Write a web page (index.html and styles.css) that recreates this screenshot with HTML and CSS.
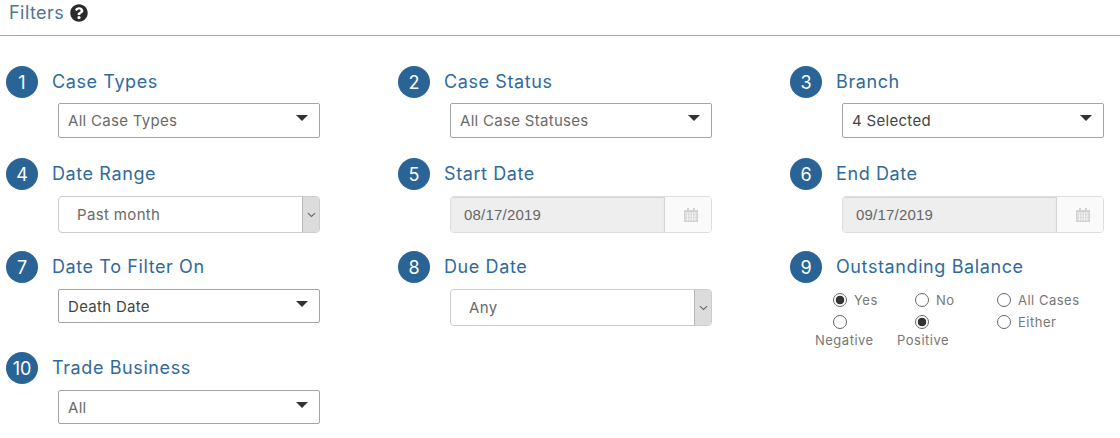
FILE: index.html
```html
<!DOCTYPE html>
<html lang="en">
<head>
    <meta charset="UTF-8">
    <meta name="viewport" content="width=device-width, initial-scale=1.0">
    <title>Filters</title>
    <link rel="stylesheet" href="styles.css">
</head>
<body>
    <div class="panel-head">
        <h2 class="panel-title">Filters</h2>
        <svg class="help-icon" viewBox="0 0 512 512"><path fill="#2b2b2b" d="M504 256c0 136.997-111.043 248-248 248S8 392.997 8 256C8 119.083 119.043 8 256 8s248 111.083 248 248zM262.655 90c-54.497 0-89.255 22.957-116.549 63.758-3.536 5.286-2.353 12.415 2.715 16.258l34.699 26.31c5.205 3.947 12.621 3.008 16.665-2.122 17.864-22.658 30.113-35.797 57.303-35.797 20.429 0 45.698 13.148 45.698 32.958 0 14.976-12.363 22.667-32.534 33.976C247.128 238.528 216 254.941 216 296v4c0 6.627 5.373 12 12 12h56c6.627 0 12-5.373 12-12v-1.333c0-28.462 83.186-29.647 83.186-106.667 0-58.002-60.165-102-116.531-102zM256 338c-25.365 0-46 20.635-46 46 0 25.364 20.635 46 46 46s46-20.636 46-46c0-25.365-20.635-46-46-46z"/></svg>
    </div>

    <div class="filters">
        <!-- Row 1 -->
        <div class="field">
            <div class="field-head"><span class="step">1</span><span class="field-label">Case Types</span></div>
            <div class="dropdown"><span>All Case Types</span><i class="caret"></i></div>
        </div>
        <div class="field">
            <div class="field-head"><span class="step">2</span><span class="field-label">Case Status</span></div>
            <div class="dropdown"><span>All Case Statuses</span><i class="caret"></i></div>
        </div>
        <div class="field">
            <div class="field-head"><span class="step">3</span><span class="field-label">Branch</span></div>
            <div class="dropdown dark"><span>4 Selected</span><i class="caret"></i></div>
        </div>

        <!-- Row 2 -->
        <div class="field">
            <div class="field-head"><span class="step">4</span><span class="field-label">Date Range</span></div>
            <div class="native-select">
                <span class="native-text">Past month</span>
                <span class="native-arrow"><svg viewBox="0 0 10 6"><path d="M1 1l4 3.6L9 1" fill="none" stroke="#666" stroke-width="1.2"/></svg></span>
            </div>
        </div>
        <div class="field">
            <div class="field-head"><span class="step">5</span><span class="field-label">Start Date</span></div>
            <div class="date-input">
                <span class="date-text">08/17/2019</span>
                <span class="date-addon"><svg viewBox="0 0 14 14"><use href="#cal"/></svg></span>
            </div>
        </div>
        <div class="field">
            <div class="field-head"><span class="step">6</span><span class="field-label">End Date</span></div>
            <div class="date-input">
                <span class="date-text">09/17/2019</span>
                <span class="date-addon"><svg viewBox="0 0 14 14"><use href="#cal"/></svg></span>
            </div>
        </div>

        <!-- Row 3 -->
        <div class="field">
            <div class="field-head"><span class="step">7</span><span class="field-label">Date To Filter On</span></div>
            <div class="dropdown dark short"><span>Death Date</span><i class="caret"></i></div>
        </div>
        <div class="field">
            <div class="field-head"><span class="step">8</span><span class="field-label">Due Date</span></div>
            <div class="native-select">
                <span class="native-text">Any</span>
                <span class="native-arrow"><svg viewBox="0 0 10 6"><path d="M1 1l4 3.6L9 1" fill="none" stroke="#666" stroke-width="1.2"/></svg></span>
            </div>
        </div>
        <div class="field">
            <div class="field-head"><span class="step">9</span><span class="field-label">Outstanding Balance</span></div>
            <div class="radios">
                <label class="radio"><input type="radio" name="paid" checked><span>Yes</span></label>
                <label class="radio"><input type="radio" name="paid"><span>No</span></label>
                <label class="radio"><input type="radio" name="paid"><span>All Cases</span></label>
                <label class="radio stack"><input type="radio" name="sign"><span>Negative</span></label>
                <label class="radio stack"><input type="radio" name="sign" checked><span>Positive</span></label>
                <label class="radio"><input type="radio" name="sign"><span>Either</span></label>
            </div>
        </div>

        <!-- Row 4 -->
        <div class="field">
            <div class="field-head"><span class="step">10</span><span class="field-label">Trade Business</span></div>
            <div class="dropdown short"><span>All</span><i class="caret"></i></div>
        </div>
    </div>

    <svg class="defs" width="0" height="0">
        <symbol id="cal" viewBox="0 0 14 14">
            <path fill="#d2d2d2" d="M0 2h3V0h2v2h4V0h2v2h3v12H0z"/>
            <path stroke="#f7f7f7" stroke-width=".8" d="M1 5h12M1 8h12M1 11h12M3.5 5v8M6 5v8M8.5 5v8M11 5v8"/>
        </symbol>
    </svg>
</body>
</html>
```

FILE: styles.css
```css
body {
    margin: 0;
    font-family: Inter, "Noto Sans", sans-serif;
    background: #fff;
    color: #666;
}

.panel-head {
    display: flex;
    align-items: center;
    gap: 6px;
    height: 25px;
    padding: 0 0 10px 9px;
    border-bottom: 1px solid #a8a8a8;
}
.panel-title {
    margin: 0;
    font-size: 18px;
    font-weight: 400;
    letter-spacing: .45px;
    color: #4f7396;
}
.help-icon { width: 18px; height: 18px; }

.filters {
    display: grid;
    grid-template-columns: 392px 392px 1fr;
    grid-template-rows: 92px 93px 101px auto;
    padding: 30px 0 0 6px;
}

.field-head {
    display: flex;
    align-items: center;
    gap: 14px;
    height: 32px;
}
.step {
    display: flex;
    align-items: center;
    justify-content: center;
    width: 32px;
    height: 32px;
    border-radius: 50%;
    background: #2a6496;
    color: #fff;
    font-size: 18px;
}
.field-label {
    margin-top: -1px;
    font-size: 18px;
    letter-spacing: .6px;
    color: #2f6a9c;
}

.dropdown {
    display: flex;
    align-items: center;
    justify-content: space-between;
    width: 262px;
    height: 35px;
    margin: 5px 0 0 52px;
    padding: 0 11px 0 9px;
    box-sizing: border-box;
    border: 1px solid #a5a5a5;
    border-radius: 2px;
    font-size: 15px;
    letter-spacing: .3px;
    color: #6a6a6a;
}
.dropdown.dark { color: #444; }
.dropdown.short { height: 34px; margin-top: 6px; }
.caret {
    width: 0;
    height: 0;
    margin-bottom: 5px;
    border-left: 6px solid transparent;
    border-right: 6px solid transparent;
    border-top: 6px solid #333;
}

.native-select {
    display: flex;
    width: 262px;
    height: 37px;
    margin: 6px 0 0 52px;
    box-sizing: border-box;
    border: 1px solid #ccc;
    border-radius: 4px;
    overflow: hidden;
    font-size: 15px;
    letter-spacing: .35px;
    color: #6a6a6a;
}
.native-text {
    flex: 1;
    align-self: center;
    padding-left: 18px;
}
.native-arrow {
    display: flex;
    align-items: center;
    justify-content: center;
    width: 16px;
    background: #dcdcdc;
    border-left: 1px solid #b5b5b5;
}
.native-arrow svg { width: 9px; height: 6px; }

.date-input {
    display: flex;
    width: 262px;
    height: 37px;
    margin: 6px 0 0 52px;
    box-sizing: border-box;
    border: 1px solid #ddd;
    border-radius: 4px;
    overflow: hidden;
    font-family: "Liberation Sans", Arial, sans-serif;
    font-size: 15px;
}
.date-text {
    flex: 1;
    align-self: stretch;
    display: flex;
    align-items: center;
    padding-left: 13px;
    background: #eee;
    border-right: 1px solid #d5d5d5;
    box-shadow: inset 0 1px 1px rgba(0, 0, 0, .1);
    letter-spacing: .2px;
    color: #666;
}
.date-addon {
    display: flex;
    align-items: center;
    justify-content: center;
    width: 46px;
    padding-left: 5px;
    box-sizing: border-box;
    background: #fafafa;
}
.date-addon svg { width: 14px; height: 14px; }

.radios {
    display: grid;
    grid-template-columns: repeat(3, 82px);
    margin: 6px 0 0 25px;
    font-size: 13px;
    letter-spacing: .5px;
    color: #777;
}
.radio {
    display: flex;
    align-self: start;
    align-items: center;
    align-content: flex-start;
    gap: 0 7px;
    min-height: 22px;
    white-space: nowrap;
}
.radio.stack { flex-wrap: wrap; }
.radio input {
    appearance: none;
    flex-shrink: 0;
    width: 14px;
    height: 14px;
    margin: 0 0 0 18px;
    border: 1px solid #666;
    border-radius: 50%;
    background: #fff;
}
.radio input:checked { background: radial-gradient(circle, #333 0, #333 4px, #fff 4.6px); }
.radio.stack input { margin-top: 4px; }
.radio.stack span { flex-basis: 100%; margin-top: 3px; }

.defs { position: absolute; }
```
